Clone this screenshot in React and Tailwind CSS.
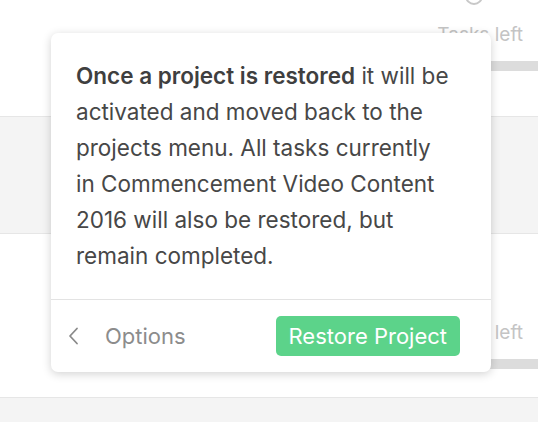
function TasksLeft({ className = '' }) {
  return (
    <div className={`flex flex-col items-end ${className}`}>
      <span className="pr-[15px] text-[19px] leading-none text-[#c4c4c4]">Tasks left</span>
      <div className="mt-[17px] h-[10px] w-[110px] bg-[#dcdcdc]" />
    </div>
  );
}

function RestorePopover() {
  return (
    <div className="absolute left-[51px] top-[33px] w-[440px] rounded-[7px] bg-white shadow-[0_2px_10px_rgba(0,0,0,0.18)]">
      <p className="pl-[25px] pr-[38px] pt-[25px] pb-[25px] text-[22.5px] leading-[36px] text-[#474747]">
        <span className="font-semibold text-[#3f3f3f]">Once a project is restored</span> it will be
        activated and moved back to the projects menu. All tasks currently in Commencement Video
        Content 2016 will also be restored, but remain completed.
      </p>
      <div className="flex h-[73px] items-center justify-between border-t border-[#e3e3e3] pl-[17px] pr-[31px]">
        <button className="flex items-center gap-[25px] text-[22px] text-[#8c8c8c]">
          <svg width="12" height="18" viewBox="0 0 12 18" fill="none">
            <polyline points="9,1.5 2,9 9,16.5" stroke="#8a8a8a" strokeWidth="1.8" strokeLinecap="round" strokeLinejoin="round" />
          </svg>
          Options
        </button>
        <button className="h-[40px] rounded-[5px] bg-[#5cd38a] px-[13px] text-[22px] text-white">
          Restore Project
        </button>
      </div>
    </div>
  );
}

export default function App() {
  return (
    <div className="relative h-[422px] w-[538px] overflow-hidden bg-[#f4f4f4] font-['Inter',sans-serif]">
      <div className="relative h-[117px] border-b border-[#e6e6e6] bg-white">
        <div className="absolute right-[55px] top-[-13px] h-[18px] w-[18px] rounded-full border-2 border-[#c8c8c8]" />
        <TasksLeft className="pt-[25px]" />
      </div>
      <div className="h-[116px] bg-[#f4f4f4]" />
      <div className="h-[165px] border-y border-[#e6e6e6] bg-white">
        <TasksLeft className="pt-[89px]" />
      </div>
      <RestorePopover />
    </div>
  );
}
